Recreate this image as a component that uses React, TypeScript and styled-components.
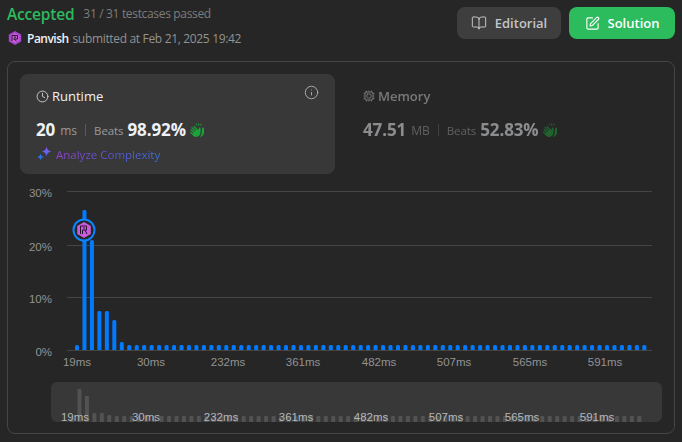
import React from "react";
import styled, { createGlobalStyle } from "styled-components";
import { BookOpen, SquarePen, Clock, Info, Cpu } from "lucide-react";
import { FaHandsClapping } from "react-icons/fa6";

const Global = createGlobalStyle`
  html, body { margin: 0; padding: 0; background: #262626; }
  body { font-family: "Open Sans", "Noto Sans", sans-serif; width: 682px; height: 442px; overflow: hidden; }
`;
const Page = styled.div`
  width: 682px; height: 442px; box-sizing: border-box; padding: 7px 7px 8px 7px;
  display: flex; flex-direction: column;
`;
const Header = styled.header`display: flex; justify-content: space-between; height: 32px; margin-bottom: 22px;`;
const Summary = styled.div`display: flex; flex-direction: column; gap: 7px;`;
const StatusRow = styled.div`display: flex; align-items: center; gap: 9px; height: 14px;`;
const Status = styled.span`font-size: 15.5px; font-weight: 600; color: #2cbb5d; line-height: 14px; letter-spacing: -0.2px;`;
const Passed = styled.span`font-size: 12px; color: #7d7d7d; line-height: 14px; letter-spacing: -0.33px;`;
const SubmitRow = styled.div`
  display: flex; align-items: center; gap: 5px; font-size: 12px; letter-spacing: -0.33px;
  color: #929292; height: 16px; margin-top: 2px; padding-left: 1px;
`;
const User = styled.b`color: #eff1f6; font-weight: 600; letter-spacing: -0.5px; margin-right: 1px;`;
const Actions = styled.div`display: flex; gap: 8px;`;
const Button = styled.button<{ $primary?: boolean }>`
  width: ${p => (p.$primary ? 106 : 104)}px; height: 32px; border: 0; border-radius: 8px;
  display: flex; align-items: center; justify-content: center; gap: 8px; padding: 0;
  font: 600 13px "Open Sans", sans-serif;
  background: ${p => (p.$primary ? "#2cbb5d" : "#3e3e3e")};
  color: ${p => (p.$primary ? "#fff" : "#c4c5c9")};
`;
const Card = styled.section`
  flex: 1; box-sizing: border-box; border: 1px solid #454545; border-radius: 8px;
  padding: 12px 12px 0 12px; display: flex; flex-direction: column;
`;
const Tabs = styled.div`display: flex; height: 100px; gap: 28px;`;
const Panel = styled.div<{ $active?: boolean }>`
  width: ${p => (p.$active ? "315px" : "260px")}; box-sizing: border-box; border-radius: 8px;
  padding: ${p => (p.$active ? "12px 16px" : "12px 0")};
  background: ${p => (p.$active ? "#383838" : "transparent")};
  position: relative; opacity: ${p => (p.$active ? 1 : 0.5)};
`;
const PanelTitle = styled.div<{ $active?: boolean }>`
  display: flex; align-items: center; gap: 3px; height: 20px; font-size: 13px;
  font-weight: ${p => (p.$active ? 500 : 600)};
  color: ${p => (p.$active ? "#eff1f6" : "#c8c8c8")};
`;
const InfoMark = styled.span`position: absolute; top: 11px; right: 16px; display: flex; color: #a8a8a8;`;
const Metric = styled.div`display: flex; align-items: center; height: 24px; margin-top: 12px; color: #eff1f6;`;
const Big = styled.span`font-size: 17px; font-weight: 700; line-height: 24px; letter-spacing: -0.1px;`;
const Unit = styled.span`font-size: 12px; color: #9a9a9a; margin-left: 5px;`;
const Rule = styled.span`width: 1px; height: 12px; background: #5a5a5a; margin: 0 8px 0 8px;`;
const Beats = styled.span`font-size: 11.5px; color: #9a9a9a; margin-right: 4px; letter-spacing: -0.1px;`;
const Hands = styled.span`display: flex; margin-left: 4px; color: #1aa338;`;
const Analyze = styled.div`display: flex; align-items: center; gap: 4px; height: 18px; margin-top: 3px; font-size: 11.5px;`;
const GradientText = styled.span`
  background: linear-gradient(90deg, #8e44c9 0%, #5a55d2 55%, #3a6fd8 100%);
  -webkit-background-clip: text; background-clip: text; color: transparent;
`;
const ChartSvg = styled.svg`display: block; width: 642px; height: 194px; margin-top: 6px;`;
const Mini = styled.div`
  width: 611px; height: 40px; margin: 8px 0 0 31px; background: #383838; border-radius: 6px; overflow: hidden;
`;
const MiniSvg = styled.svg`display: block; width: 611px; height: 40px;`;

const COUNT = 77;
const STEP = 7.465;
const heights = [5, 140, 110, 39, 39, 30, 8];
const ticks: [string, number, number][] = [
  ["19ms", 77, 75], ["30ms", 151, 146], ["232ms", 228, 221], ["361ms", 303, 296],
  ["482ms", 379, 371], ["507ms", 454, 446], ["565ms", 530, 522], ["591ms", 605, 597],
];
const grid: [string, number][] = [["30%", 191], ["20%", 245], ["10%", 297], ["0%", 350]];
const miniTops = [418, 389, 396, 413, 413, 415, 416];
const AXIS = { fontFamily: "'Liberation Sans', Arial, sans-serif", fontSize: 11.5 };

function Chart() {
  return (
    <ChartSvg viewBox="20 180 642 194">
      {grid.map(([l, y]) => (
        <g key={l}>
          <line x1="67" x2="652" y1={y + 0.5} y2={y + 0.5} stroke="#454545" />
          <text x="52" y={y + 6} textAnchor="end" fill="#939393" {...AXIS}>{l}</text>
        </g>
      ))}
      {Array.from({ length: COUNT }, (_, i) => {
        const h = heights[i] ?? 5;
        return <path key={i} d={`M${75 + i * STEP} 350v-${h - 1.5}q0-1.5 1.5-1.5h1q1.5 0 1.5 1.5v${h - 1.5}z`} fill="#007aff" />;
      })}
      <circle cx="84" cy="230" r="10.5" fill="#262626" stroke="#0a84ff" strokeWidth="2" />
      <path d="M84 222l6.8 3.9v8.2L84 238l-6.8-3.9v-8.2z" fill="#c95bdc" />
      <path d="M80.5 226h6v4h-4v4M80.5 226v8M83 228h2M85 230l2 4" fill="none" stroke="#2a1530" strokeWidth="1" />
      {ticks.map(([l, x]) => (
        <text key={l} x={x} y="366" textAnchor="middle" fill="#939393" {...AXIS}>{l}</text>
      ))}
    </ChartSvg>
  );
}

function MiniMap() {
  return (
    <Mini>
      <MiniSvg viewBox="51 382 611 40">
        {Array.from({ length: COUNT }, (_, i) => {
          const x = 70 + i * STEP;
          const top = miniTops[i] ?? 416;
          return <path key={i} d={`M${x} 423V${top + 1}q0-1 1-1h2q1 0 1 1V423z`} fill="#525252" />;
        })}
        {ticks.map(([l, , x]) => (
          <text key={l} x={x} y="421" textAnchor="middle" fill="#b4b7bc" {...AXIS}>{l}</text>
        ))}
      </MiniSvg>
    </Mini>
  );
}

function Sparkle() {
  return (
    <svg width="16" height="16" viewBox="0 0 16 16">
      <defs>
        <linearGradient id="sp" x1="0" y1="1" x2="1" y2="0">
          <stop offset="0" stopColor="#3a6ff5" />
          <stop offset="1" stopColor="#a24fe8" />
        </linearGradient>
      </defs>
      <path d="M10.5 .5c.7 3.2 1.6 4.2 5 5-3.4.8-4.3 1.8-5 5-.7-3.2-1.6-4.2-5-5 3.4-.8 4.3-1.8 5-5z" fill="url(#sp)" />
      <path d="M4.5 7.5c.5 2.3 1.2 3 3.5 3.5-2.3.5-3 1.2-3.5 3.5C4 12.2 3.3 11.500 1 11c2.300-.5 3-1.200 3.500-3.500z" fill="#2f6ff0" />
    </svg>
  );
}

function Avatar() {
  return (
    <svg width="14" height="14" viewBox="0 0 14 14">
      <path d="M7 0l6.200 3.500v7L7 14 .8 10.500v-7z" fill="#a445cc" />
      <path d="M7 2l4.300 2.500v5L7 12 2.700 9.500v-5z" fill="#c95bdc" />
      <path d="M4 4.500h5.500v3.500h-4M4 4.500v5.500M6 6.200h2M6 8l2.500 2" fill="none" stroke="#2a1530" strokeWidth="1" />
    </svg>
  );
}

export default function App() {
  return (
    <Page>
      <Global />
      <Header>
        <Summary>
          <StatusRow>
            <Status>Accepted</Status>
            <Passed>31 / 31 testcases passed</Passed>
          </StatusRow>
          <SubmitRow>
            <Avatar />
            <span><User>Panvish</User> submitted at Feb 21, 2025 19:42</span>
          </SubmitRow>
        </Summary>
        <Actions>
          <Button><BookOpen size={16} strokeWidth={1.5} />Editorial</Button>
          <Button $primary><SquarePen size={15} strokeWidth={1.8} />Solution</Button>
        </Actions>
      </Header>
      <Card>
        <Tabs>
          <Panel $active>
            <PanelTitle $active><Clock size={13} strokeWidth={1.8} color="#c8c8c8" />Runtime</PanelTitle>
            <InfoMark><Info size={15} strokeWidth={1.6} /></InfoMark>
            <Metric>
              <Big>20</Big><Unit>ms</Unit><Rule />
              <Beats>Beats</Beats><Big>98.92%</Big>
              <Hands><FaHandsClapping size={14} /></Hands>
            </Metric>
            <Analyze><Sparkle /><GradientText>Analyze Complexity</GradientText></Analyze>
          </Panel>
          <Panel>
            <PanelTitle><Cpu size={12} strokeWidth={1.8} />Memory</PanelTitle>
            <Metric>
              <Big>47.51</Big><Unit>MB</Unit><Rule />
              <Beats>Beats</Beats><Big>52.83%</Big>
              <Hands><FaHandsClapping size={14} /></Hands>
            </Metric>
          </Panel>
        </Tabs>
        <Chart />
        <MiniMap />
      </Card>
    </Page>
  );
}
